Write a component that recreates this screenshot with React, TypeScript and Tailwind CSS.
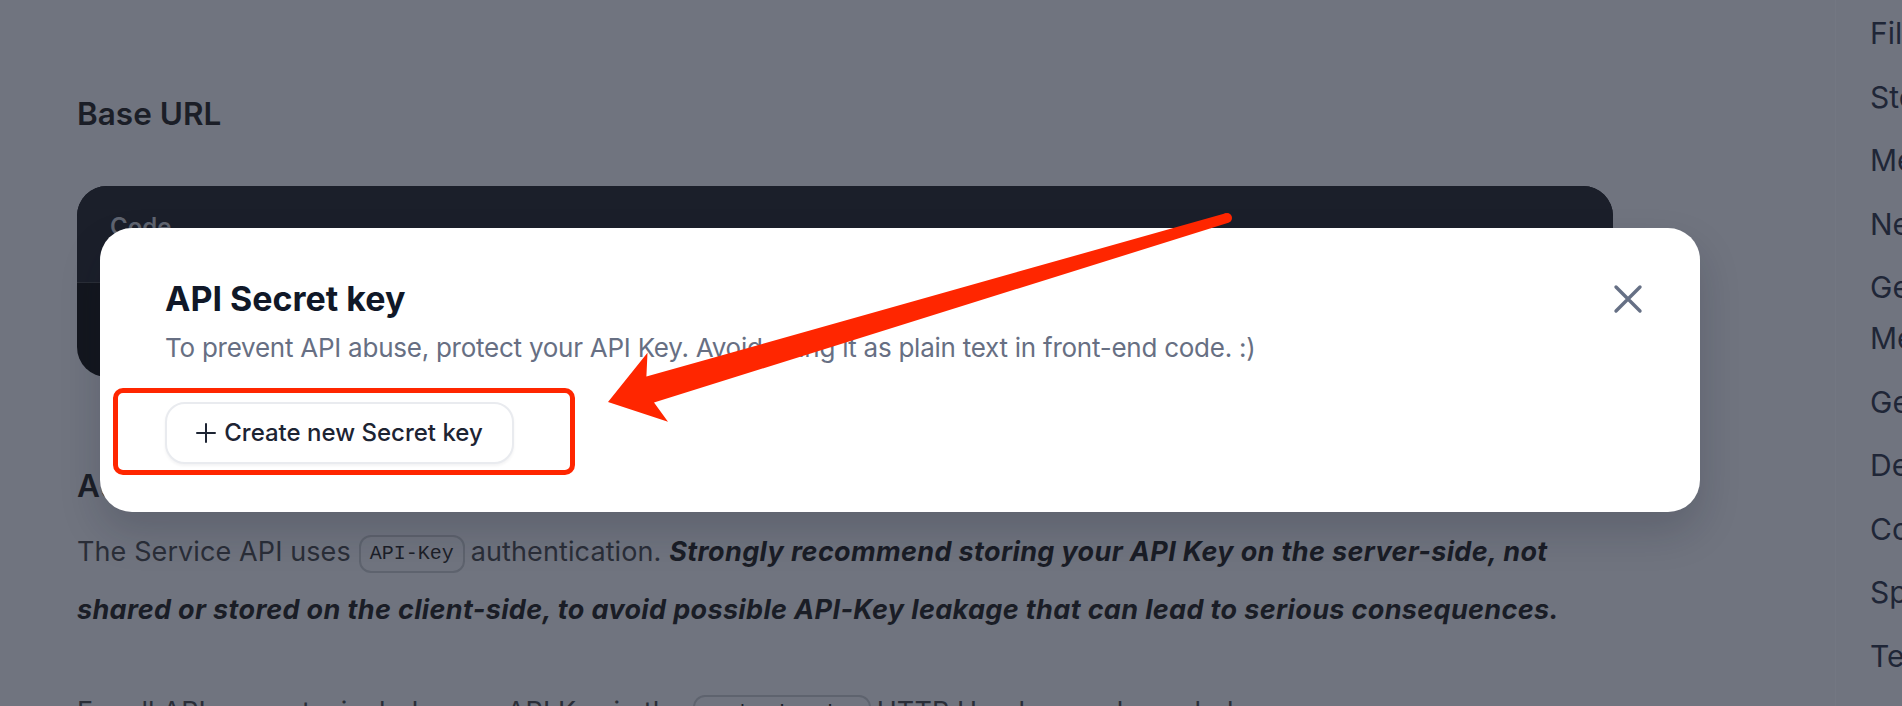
import React from 'react';

const tocItems = [
  'File Upload',
  'Stop Generate',
  'Message Feedback',
  'Next Suggested Questions',
  'Get Conversation History Messages',
  'Get Conversations',
  'Delete Conversation',
  'Conversation Rename',
  'Speech to text',
  'Text to speech',
];

const CodePill: React.FC<{ children: React.ReactNode }> = ({ children }) => (
  <span className="ml-[8px] mr-[6px] inline-flex h-[38px] items-center rounded-[12px] border-2 border-[#5e636e] px-[9px] align-middle font-['Liberation_Mono',monospace] text-[20px] not-italic tracking-normal text-[#1c1f28]">
    {children}
  </span>
);

const PlusIcon = () => (
  <svg width="20" height="20" viewBox="0 0 20 20" fill="none" stroke="currentColor" strokeWidth="2" strokeLinecap="round">
    <path d="M10 1v18M1 10h18" />
  </svg>
);

const CloseIcon = () => (
  <svg width="32" height="32" viewBox="0 0 32 32" fill="none" stroke="currentColor" strokeWidth="3.4" strokeLinecap="round">
    <path d="M4 4l24 24M28 4L4 28" />
  </svg>
);

export default function App() {
  return (
    <div className="relative h-[706px] w-full overflow-hidden bg-[#70747f] font-['Inter',sans-serif]">
      {/* page underneath the backdrop */}
      <div className="flex">
        <main className="w-[1835px] shrink-0 pl-[77px] pt-[94px]">
          <div className="w-[1536px]">
            <h3 className="text-[31.5px] leading-[40px] font-semibold text-[#1b1e27]">Base URL</h3>

            <div className="mt-[52px] overflow-hidden rounded-[30px] bg-[#13161e]">
              <div className="h-[97px] border-b border-[#2a2e37] bg-[#1b1f2a] pl-[33px] pt-[25px]">
                <span className="text-[24px] leading-[32px] font-semibold text-[#5f6470]">Code</span>
              </div>
              <div className="h-[94px] px-[33px] py-[28px] font-['Liberation_Mono',monospace] text-[24px] text-[#5f6470]">
                https://api.dify.ai/v1
              </div>
            </div>

            <h3 className="mt-[89px] text-[31.5px] leading-[40px] font-semibold text-[#1b1e27]">Authentication</h3>

            <p className="mt-[17px] text-[27px] leading-[58px] tracking-[0.1px] text-[#2a2e38]">
              The Service API uses<CodePill>API-Key</CodePill>authentication.{' '}
              <strong className="font-bold italic tracking-[0.35px] text-[#1a1d26]">
                Strongly recommend storing your API Key on the server-side, not
                <br />
                shared or stored on the client-side, to avoid possible API-Key leakage that can lead to serious consequences.
              </strong>
            </p>

            <p className="mt-[44px] text-[27px] leading-[58px] tracking-[0.1px] text-[#2a2e38]">
              For all API requests, include your API Key in the<CodePill>Authorization</CodePill>HTTP Header, as shown below:
            </p>
          </div>
        </main>

        <aside className="w-[500px] shrink-0 border-l border-[#737782] pl-[34px] pt-[8px]">
          <ul className="flex flex-col gap-[12.5px]">
            {tocItems.map((item) => (
              <li key={item} className="text-[30px] leading-[51px] text-[#1f2637]">
                {item}
              </li>
            ))}
          </ul>
        </aside>
      </div>

      {/* dialog */}
      <div className="absolute inset-0 pl-[100px] pt-[228px]">
        <div className="relative h-[284px] w-[1600px] rounded-[32px] bg-white pl-[65px] pt-[51px] shadow-[0_20px_40px_rgba(16,24,40,0.18)]">
          <h2 className="text-[34px] leading-[40px] font-bold text-[#101828]">API Secret key</h2>
          <p className="mt-[9px] text-[26px] leading-[40px] tracking-[-0.25px] text-[#676f83]">
            To prevent API abuse, protect your API Key. Avoid using it as plain text in front-end code. :)
          </p>
          <button className="mt-[34px] flex h-[62px] w-[349px] items-center justify-center gap-[8px] rounded-[20px] border-2 border-[#e9ebef] bg-white text-[24px] font-medium text-[#1d2433] shadow-[0_2px_3px_rgba(16,24,40,0.05)]">
            <PlusIcon />
            Create new Secret key
          </button>
          <button className="absolute right-[56px] top-[55px] text-[#667085]">
            <CloseIcon />
          </button>
        </div>
      </div>

      {/* annotation */}
      <div className="pointer-events-none absolute left-[113px] top-[388px] h-[87px] w-[462px] rounded-[10px] border-[5px] border-[#ff2600]" />
      <svg className="pointer-events-none absolute inset-0" width="1902" height="706" viewBox="0 0 1902 706">
        <polygon
          fill="#ff2600"
          points="608,402 647.5,352.7 646.4,376.6 1225.6,213.2 1228.4,222.8 654,402.4 668,421.7"
        />
        <circle cx="1227" cy="218" r="5" fill="#ff2600" />
      </svg>
    </div>
  );
}
